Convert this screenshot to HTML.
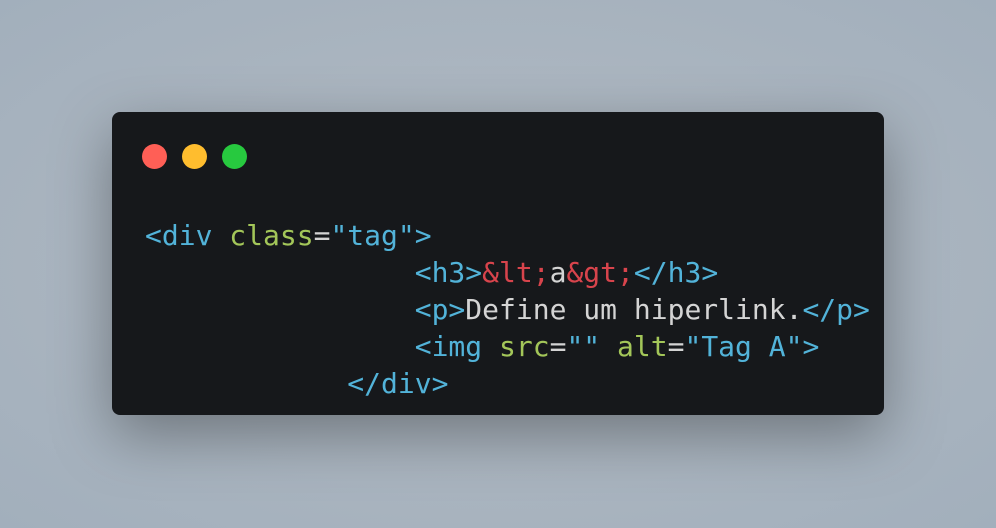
<!DOCTYPE html>
<html><head><style>
html,body{margin:0;padding:0}
body{width:996px;height:528px;background:radial-gradient(ellipse at center,#b4bcc4 0%,#a9b4bf 60%,#a2afbc 100%);position:relative;overflow:hidden}
.win{position:absolute;left:112px;top:112px;width:772px;height:303px;background:#16181b;border-radius:8px;box-shadow:0 20px 60px rgba(0,0,0,0.35)}
.dot{position:absolute;top:32px;width:25px;height:25px;border-radius:50%}
pre{position:absolute;left:33px;top:105px;margin:0;font-family:"DejaVu Sans Mono","Liberation Mono",monospace;font-size:28px;line-height:37px;color:#d4d4d4}
.b{color:#52b3d9}.g{color:#a3c659}.r{color:#d8444c}.w{color:#d4d4d4}
</style></head><body>
<div class="win">
<div class="dot" style="left:30px;background:#ff5f56"></div>
<div class="dot" style="left:70px;background:#ffbd2e"></div>
<div class="dot" style="left:110px;background:#27c93f"></div>
<pre><span class="b">&lt;div</span> <span class="g">class</span><span class="w">=</span><span class="b">"tag"&gt;</span>
                <span class="b">&lt;h3&gt;</span><span class="r">&amp;lt;</span>a<span class="r">&amp;gt;</span><span class="b">&lt;/h3&gt;</span>
                <span class="b">&lt;p&gt;</span>Define um hiperlink.<span class="b">&lt;/p&gt;</span>
                <span class="b">&lt;img</span> <span class="g">src</span>=<span class="b">""</span> <span class="g">alt</span>=<span class="b">"Tag A"&gt;</span>
            <span class="b">&lt;/div&gt;</span></pre>
</div>
</body></html>
